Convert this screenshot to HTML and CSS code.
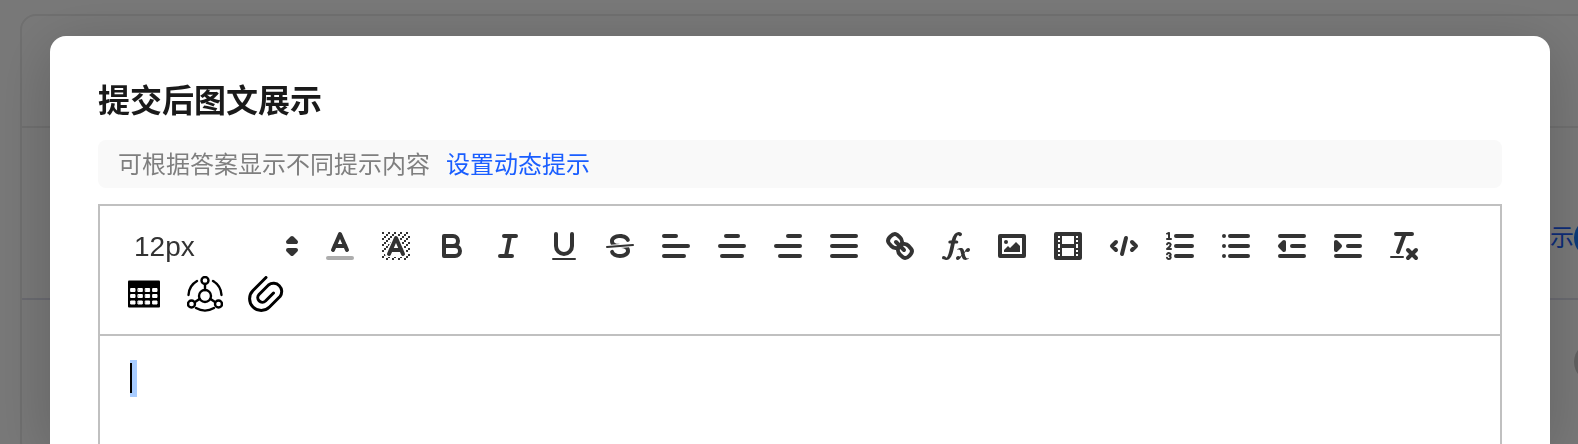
FILE: index.html
```html
<!DOCTYPE html>
<html lang="zh-CN">

<head>
    <meta charset="UTF-8">
    <title>提交后图文展示</title>
    <link rel="stylesheet" href="styles.css">
</head>

<body>
    <div class="page">
        <div class="card">
            <div class="card-head"></div>
            <div class="card-row">
                <span class="card-link">示</span>
                <span class="dot dot-blue"></span>
            </div>
            <div class="card-body">
                <span class="dot dot-gray"></span>
            </div>
        </div>
    </div>
    <div class="mask">
        <div class="modal" role="dialog" aria-labelledby="title">
            <h1 id="title">提交后图文展示</h1>
            <div class="tip">
                <span>可根据答案显示不同提示内容</span>
                <a href="#">设置动态提示</a>
            </div>
            <div class="editor">
                <div class="toolbar">
                    <div class="tools">
                        <div class="size">
                            <select aria-label="字号">
                                <option>12px</option>
                                <option>14px</option>
                                <option>16px</option>
                            </select>
                            <svg class="icon" viewBox="0 0 18 18">
                                <polygon class="both" points="7 11 9 13 11 11 7 11" />
                                <polygon class="both" points="7 7 9 5 11 7 7 7" />
                            </svg>
                        </div>
                        <button aria-label="文字颜色"><svg class="icon" viewBox="0 0 18 18">
                                <path class="faded" d="M3,15H15" />
                                <polyline points="5.5 11 9 3 12.5 11" />
                                <path d="M11.63,9H6.38" />
                            </svg></button>
                        <button aria-label="背景颜色"><svg class="icon" viewBox="0 0 18 18">
                                <defs>
                                    <pattern id="hatch" width="3" height="3" patternUnits="userSpaceOnUse">
                                        <path class="fill" d="M0,1h1v1h-1zM1,0h1v1h-1zM2,2h1v1h-1z" />
                                    </pattern>
                                    <mask id="around">
                                        <rect class="show" x="2" y="2" width="14" height="14" />
                                        <polygon class="hide" points="5 13 9 5 13 13" />
                                    </mask>
                                </defs>
                                <rect class="hatch" x="2" y="2" width="14" height="14" mask="url(#around)" />
                                <polyline points="5.5 13 9 5 12.5 13" />
                                <path d="M11.63,11H6.38" />
                            </svg></button>
                        <button aria-label="加粗"><svg class="icon" viewBox="0 0 18 18">
                                <path d="M5,4H9.5A2.5,2.5,0,0,1,9.5,9H5Z" />
                                <path d="M5,9h5.5A2.5,2.5,0,0,1,10.5,14H5Z" />
                            </svg></button>
                        <button aria-label="斜体"><svg class="icon" viewBox="0 0 18 18">
                                <path d="M7,4H13M5,14H11M8,14L10,4" />
                            </svg></button>
                        <button aria-label="下划线"><svg class="icon" viewBox="0 0 18 18">
                                <path d="M5,3V9a4,4,0,0,0,8,0V3" />
                                <rect class="fill" height="1" rx="0.5" ry="0.5" width="12" x="3" y="15" />
                            </svg></button>
                        <button aria-label="删除线"><svg class="icon" viewBox="0 0 18 18">
                                <path class="thin" d="M15.5,8.5L2.5,9.5" />
                                <path class="fill" d="M9.007,8C6.542,7.791,6,7.519,6,6.5,6,5.792,7.283,5,9,5c1.571,0,2.765.679,2.969,1.309a1,1,0,0,0,1.9-.617C13.356,4.106,11.354,3,9,3,6.2,3,4,4.538,4,6.5a3.2,3.2,0,0,0,.5,1.843Z" />
                                <path class="fill" d="M8.984,10C11.457,10.208,12,10.479,12,11.5c0,0.708-1.283,1.5-3,1.5-1.571,0-2.765-.679-2.969-1.309a1,1,0,1,0-1.9.617C4.644,13.894,6.646,15,9,15c2.8,0,5-1.538,5-3.5a3.2,3.2,0,0,0-.5-1.843Z" />
                            </svg></button>
                        <button aria-label="左对齐"><svg class="icon" viewBox="0 0 18 18">
                                <path d="M3,4H9M3,9H15M3,14H13" />
                            </svg></button>
                        <button aria-label="居中"><svg class="icon" viewBox="0 0 18 18">
                                <path d="M6,4H12M3,9H15M4,14H14" />
                            </svg></button>
                        <button aria-label="右对齐"><svg class="icon" viewBox="0 0 18 18">
                                <path d="M9,4H15M3,9H15M5,14H15" />
                            </svg></button>
                        <button aria-label="两端对齐"><svg class="icon" viewBox="0 0 18 18">
                                <path d="M3,4H15M3,9H15M3,14H15" />
                            </svg></button>
                        <button aria-label="链接"><svg class="icon" viewBox="0 0 18 18">
                                <path d="M7,7L11,11" />
                                <path d="M8.9,4.577a3.476,3.476,0,0,1,.36,4.679A3.476,3.476,0,0,1,4.577,8.9C3.185,7.5,2.035,6.4,4.217,4.217S7.5,3.185,8.9,4.577Z" />
                                <path d="M13.423,9.1a3.476,3.476,0,0,0-4.679-.36,3.476,3.476,0,0,0,.36,4.679c1.392,1.392,2.5,2.542,4.679.36S14.815,10.5,13.423,9.1Z" />
                            </svg></button>
                        <button aria-label="公式"><svg class="icon" viewBox="0 0 18 18">
                                <path class="fill" d="M11.759,2.482a2.561,2.561,0,0,0-3.53.607A7.656,7.656,0,0,0,6.8,6.2C6.109,9.188,5.275,14.677,4.15,14.927a1.545,1.545,0,0,0-1.3-.933A0.922,0.922,0,0,0,2,15.036S1.954,16,4.119,16s3.091-2.691,3.7-5.553c0.177-.826.36-1.726,0.554-2.6L8.775,6.2c0.381-1.421.807-2.521,1.306-2.676a1.014,1.014,0,0,0,1.02.56A0.966,0.966,0,0,0,11.759,2.482Z" />
                                <rect class="fill" height="1.6" rx="0.8" ry="0.8" width="5" x="5.15" y="6.2" />
                                <path class="fill" d="M13.663,12.027a1.662,1.662,0,0,1,.266-0.276q0.193,0.069.456,0.138a2.1,2.1,0,0,0,.535.069,1.075,1.075,0,0,0,.767-0.3,1.044,1.044,0,0,0,.314-0.8,0.84,0.84,0,0,0-.238-0.619,0.8,0.8,0,0,0-.594-0.239,1.154,1.154,0,0,0-.781.3,4.607,4.607,0,0,0-.781,1q-0.091.15-.218,0.346l-0.246.38c-0.068-.288-0.137-0.582-0.212-0.885-0.459-1.847-2.494-.984-2.941-0.8-0.482.2-.353,0.647-0.094,0.529a0.869,0.869,0,0,1,1.281.585c0.217,0.751.377,1.436,0.527,2.038a5.688,5.688,0,0,1-.362.467,2.69,2.69,0,0,1-.264.271q-0.221-.08-0.471-0.147a2.029,2.029,0,0,0-.522-0.066,1.079,1.079,0,0,0-.768.3A1.058,1.058,0,0,0,9,15.131a0.82,0.82,0,0,0,.832.852,1.134,1.134,0,0,0,.787-0.3,5.11,5.11,0,0,0,.776-0.993q0.141-.219.215-0.34c0.046-.076.122-0.194,0.223-0.346a2.786,2.786,0,0,0,.918,1.726,2.582,2.582,0,0,0,2.376-.185c0.317-.181.212-0.565,0-0.494A0.807,0.807,0,0,1,14.176,15a5.159,5.159,0,0,1-.913-2.446l0,0Q13.487,12.24,13.663,12.027Z" />
                            </svg></button>
                        <button aria-label="图片"><svg class="icon" viewBox="0 0 18 18">
                                <rect height="10" width="12" x="3" y="4" />
                                <circle class="fill" cx="6" cy="7" r="1" />
                                <polygon class="fill" points="5 12 5 11 7 9 8 10 11 7 13 9 13 12" />
                            </svg></button>
                        <button aria-label="视频"><svg class="icon" viewBox="0 0 18 18">
                                <rect height="12" width="12" x="3" y="3" />
                                <path class="fill" d="M5,3h1v12h-1zM12,3h1v12h-1zM5,8h8v2h-8z" />
                                <path class="fill" d="M3,5h3v1h-3zM3,7h3v1h-3zM3,10h3v1h-3zM3,12h3v1h-3z" />
                                <path class="fill" d="M12,5h3v1h-3zM12,7h3v1h-3zM12,10h3v1h-3zM12,12h3v1h-3z" />
                            </svg></button>
                        <button aria-label="代码"><svg class="icon" viewBox="0 0 18 18">
                                <path d="M5,7L3,9L5,11M13,7L15,9L13,11M10,5L8,13" />
                            </svg></button>
                        <button aria-label="有序列表"><svg class="icon" viewBox="0 0 18 18">
                                <path d="M7,4H15M7,9H15M7,14H15" />
                                <path class="thin" d="M2.5,5.5H4.5" />
                                <path class="fill" d="M3.5,6A0.5,0.5,0,0,1,3,5.5V3.085l-0.276.138A0.5,0.5,0,0,1,2.053,3c-0.124-.247-0.023-0.324.224-0.447l1-.5A0.5,0.5,0,0,1,4,2.5v3A0.5,0.5,0,0,1,3.5,6Z" />
                                <path class="thin" d="M4.5,10.5h-2c0-.234,1.85-1.076,1.85-2.234A0.959,0.959,0,0,0,2.5,8.156" />
                                <path class="thin" d="M2.5,14.846a0.959,0.959,0,0,0,1.85-.109A0.7,0.7,0,0,0,3.75,14a0.688,0.688,0,0,0,.6-0.736,0.959,0.959,0,0,0-1.85-.109" />
                            </svg></button>
                        <button aria-label="无序列表"><svg class="icon" viewBox="0 0 18 18">
                                <path d="M6,4H15M6,9H15M6,14H15M3,4H3M3,9H3M3,14H3" />
                            </svg></button>
                        <button aria-label="减少缩进"><svg class="icon" viewBox="0 0 18 18">
                                <path d="M3,4H15M9,9H15M3,14H15" />
                                <polygon class="both" points="5 7 5 11 3 9 5 7" />
                            </svg></button>
                        <button aria-label="增加缩进"><svg class="icon" viewBox="0 0 18 18">
                                <path d="M3,4H15M9,9H15M3,14H15" />
                                <polygon class="both" points="3 7 3 11 5 9 3 7" />
                            </svg></button>
                        <button aria-label="清除格式"><svg class="icon" viewBox="0 0 18 18">
                                <path d="M5,3H13M6,12L9.35,3M11,11L15,15M15,11L11,15" />
                                <rect class="fill" height="1" rx="0.5" ry="0.5" width="7" x="2" y="14" />
                            </svg></button>
                    </div>
                    <div class="tools extra">
                        <button aria-label="表格"><svg class="icon-black" viewBox="0 0 36 36">
                                <rect class="cells" x="2" y="4.5" width="32" height="27" rx="1" />
                                <path class="gaps" d="M5,12.5h4v3h-4zM12.3,12.5h4v3h-4zM19.6,12.5h4v3h-4zM27,12.5h4v3h-4zM5,18.5h4v3h-4zM12.3,18.5h4v3h-4zM19.6,18.5h4v3h-4zM27,18.5h4v3h-4zM5,25h4v3h-4zM12.3,25h4v3h-4zM19.6,25h4v3h-4zM27,25h4v3h-4z" />
                            </svg></button>
                        <button aria-label="关系图"><svg class="icon-black" viewBox="0 0 36 36">
                                <circle cx="18" cy="20" r="6" />
                                <circle cx="18" cy="4.500" r="3.500" />
                                <circle cx="4.500" cy="28" r="3.500" />
                                <circle cx="31.500" cy="28" r="3.500" />
                                <path d="M18,8V14M12.500,23L8,26M23.500,23L28,26" />
                                <path d="M10,5A17,17,0,0,0,1.500,19M26,5A17,17,0,0,1,34.500,19M9,32A18,18,0,0,0,27,32" />
                            </svg></button>
                        <button aria-label="附件"><svg class="icon-black" viewBox="0 0 36 36">
                                <path class="clip" d="M18,1.500L5,14.500A11.500,11.500,0,0,0,21.500,31L32,20.500A8.200,8.200,0,0,0,20.500,9L11,18.500A4.600,4.600,0,0,0,17.500,25L25.500,17" />
                            </svg></button>
                    </div>
                </div>
                <div class="content" contenteditable="true" role="textbox" aria-label="内容"><span class="selection"></span></div>
            </div>
        </div>
    </div>
</body>

</html>
```

FILE: styles.css
```css
* {
    box-sizing: border-box;
}

body {
    margin: 0;
    min-height: 100vh;
    overflow: hidden;
    background-color: white;
    font-family: "Liberation Sans", "Noto Sans CJK SC", sans-serif;
    font-size: 24px;
}

.page {
    padding: 14px 0 0 20px;
}

.card {
    margin-right: -38px;
    height: 100vh;
    border: 2px solid #ececec;
    border-radius: 16px;
}

.card-head {
    height: 112px;
    border-bottom: 2px solid #ececec;
}

.card-row {
    height: 172px;
    padding: 90px 0 0;
    display: flex;
    justify-content: flex-end;
    align-items: flex-start;
    border-bottom: 2px solid #e0e1ee;
    line-height: 40px;
}

.card-link {
    color: #1a5eff;
}

.dot {
    width: 40px;
    height: 40px;
    border-radius: 50%;
}

.dot-blue {
    background-color: #1a7cff;
}

.dot-gray {
    background-color: #ccc;
}

.card-body {
    padding-top: 42px;
    display: flex;
    justify-content: flex-end;
}

.mask {
    position: fixed;
    inset: 0;
    padding: 36px 28px 0 50px;
    display: flex;
    background-color: rgba(0, 0, 0, 0.53);
}

.modal {
    flex: 1;
    padding: 40px 48px 0;
    display: flex;
    flex-direction: column;
    background-color: white;
    border-radius: 16px 16px 0 0;
    box-shadow: 0 12px 60px rgba(0, 0, 0, 0.2);
}

h1 {
    margin: 0 0 14px;
    font-size: 32px;
    line-height: 50px;
    font-weight: 700;
    color: #1a1a1a;
}

.tip {
    padding: 2px 20px 0;
    display: flex;
    gap: 16px;
    line-height: 46px;
    color: #7f7f7f;
    background-color: #f9f9f9;
    border-radius: 8px;
}

.tip a {
    color: #1a5eff;
    text-decoration: none;
}

.editor {
    flex: 1;
    margin-top: 16px;
    border: 2px solid #c0c0c0;
    border-bottom: none;
}

.toolbar {
    padding: 16px;
    border-bottom: 2px solid #c0c0c0;
}

.tools {
    display: flex;
    flex-wrap: wrap;
}

.extra {
    gap: 5px;
}

.tools button {
    width: 56px;
    height: 48px;
    padding: 6px 10px;
    border: none;
    background: none;
    cursor: pointer;
}

.size {
    position: relative;
    width: 196px;
    height: 48px;
}

.size select {
    width: 100%;
    height: 48px;
    padding: 0 18px;
    border: none;
    appearance: none;
    background: none;
    font-family: "Liberation Sans", sans-serif;
    font-size: 28px;
    font-weight: 500;
    color: #333;
}

.size .icon {
    position: absolute;
    top: 6px;
    right: 2px;
    pointer-events: none;
}

.icon,
.icon-black {
    display: block;
    width: 36px;
    height: 36px;
    fill: none;
    stroke: #333;
    stroke-width: 2;
    stroke-linecap: round;
    stroke-linejoin: round;
}

.icon .fill {
    fill: #333;
    stroke: none;
}

.icon .both {
    fill: #333;
}

.icon .thin {
    stroke-width: 1;
}

.icon .faded {
    opacity: 0.4;
}

.icon .hatch {
    fill: url(#hatch);
    stroke: none;
}

.icon .show {
    fill: white;
    stroke: none;
}

.icon .hide {
    fill: black;
    stroke: black;
    stroke-width: 3;
}

.icon-black {
    stroke: black;
    stroke-width: 2.4;
}

.icon-black .cells {
    fill: black;
    stroke: none;
}

.icon-black .gaps {
    fill: white;
    stroke: white;
    stroke-width: 1;
}

.icon-black .clip {
    stroke-width: 3;
}

.content {
    padding: 24px 30px;
    outline: none;
}

.selection {
    display: block;
    width: 7px;
    height: 37px;
    padding: 3px 0 4px;
    background-color: #a8ccff;
}

/* caret */
.selection::before {
    content: "";
    display: block;
    width: 2px;
    height: 30px;
    background-color: black;
}
```
